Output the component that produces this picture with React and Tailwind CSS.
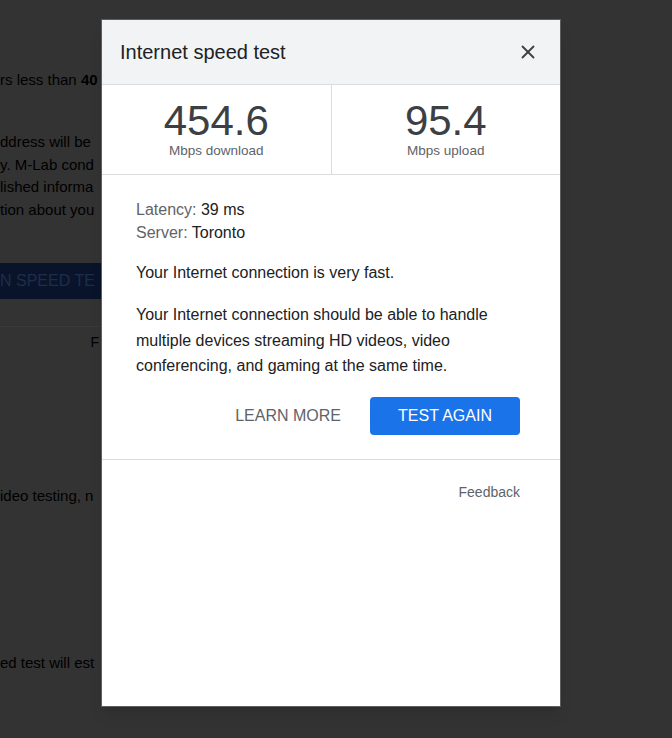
import { X } from "lucide-react";

const font = { fontFamily: '"Liberation Sans", Arial, sans-serif' };

function BackgroundPage() {
  // dimmed page behind the modal
  return (
    <div className="flex w-full">
      <div className="flex w-[101px] shrink-0 flex-col overflow-hidden whitespace-nowrap text-[15px]">
        <div className="h-[69px]" />
        <div className="leading-[22px] text-black">
          rs less than <b>40</b>
        </div>
        <div className="mt-[40px] flex flex-col leading-[22.7px] text-black">
          <span className="text-black">ddress will be</span>
          <span className="text-black">y. M-Lab cond</span>
          <span className="text-black">lished informa</span>
          <span className="text-black">tion about you</span>
        </div>
        <div className="mt-[41px] flex h-[36px] items-center bg-[#09142b]">
          <span className="text-base text-[#1f2d4a]">N SPEED TE</span>
        </div>
        <div className="mt-[27px] border-t border-[#3a3a3a]" />
        <div className="mt-[5px] flex justify-end pr-[2px] text-sm leading-[20px] text-black">F</div>
        <div className="mt-[133px] leading-[22px] text-black">ideo testing, n</div>
        <div className="mt-[145px] leading-[22px] text-black">ed test will est</div>
      </div>
    </div>
  );
}

function Metric({ value, label }) {
  return (
    <div className="flex flex-1 flex-col items-center pt-[16px]">
      <div className="text-[42px] leading-[40px] text-[#3c4043]">{value}</div>
      <div className="mt-[2px] text-[13.5px] leading-[16px] text-[#5f6368]">{label}</div>
    </div>
  );
}

function SpeedDialog() {
  return (
    <div className="absolute left-[101px] top-[19px] flex h-[688px] w-[460px] flex-col border border-[#5e5e5e] bg-white shadow-lg">
      {/* header */}
      <div className="flex h-[65px] items-center justify-between border-b border-[#dadce0] bg-[#f1f3f4] pl-[18px] pr-[21px]">
        <div className="text-[20px] text-[#202124]">Internet speed test</div>
        <X size={22} strokeWidth={2} className="text-[#3c4043]" />
      </div>
      {/* results */}
      <div className="flex h-[90px] border-b border-[#dadce0]">
        <Metric value="454.6" label="Mbps download" />
        <div className="w-px bg-[#dadce0]" />
        <Metric value="95.4" label="Mbps upload" />
      </div>
      {/* body */}
      <div className="flex flex-col border-b border-[#dadce0] pl-[34px] pr-[40px] pt-[23px] pb-[24px] text-base text-[#202124]">
        <div className="leading-[23px]">
          <span className="text-[#5f6368]">Latency:</span> 39 ms
        </div>
        <div className="leading-[23px]">
          <span className="text-[#5f6368]">Server:</span> Toronto
        </div>
        <p className="mt-[16px] leading-[25px]">Your Internet connection is very fast.</p>
        <p className="mt-[17px] leading-[25.5px]">
          Your Internet connection should be able to handle multiple devices streaming HD videos, video conferencing,
          and gaming at the same time.
        </p>
        <div className="mt-[18px] flex items-center justify-end gap-[29px]">
          <button className="text-base text-[#5f6368]">LEARN MORE</button>
          <button className="h-[38px] w-[150px] rounded-[4px] bg-[#1a73e8] text-base text-white">TEST AGAIN</button>
        </div>
      </div>
      <div className="flex justify-end pr-[40px] pt-[22px] text-sm text-[#5f6368]">Feedback</div>
    </div>
  );
}

export default function App() {
  return (
    <div className="relative h-[738px] w-[672px] overflow-hidden bg-[#333333]" style={font}>
      <BackgroundPage />
      <SpeedDialog />
    </div>
  );
}
